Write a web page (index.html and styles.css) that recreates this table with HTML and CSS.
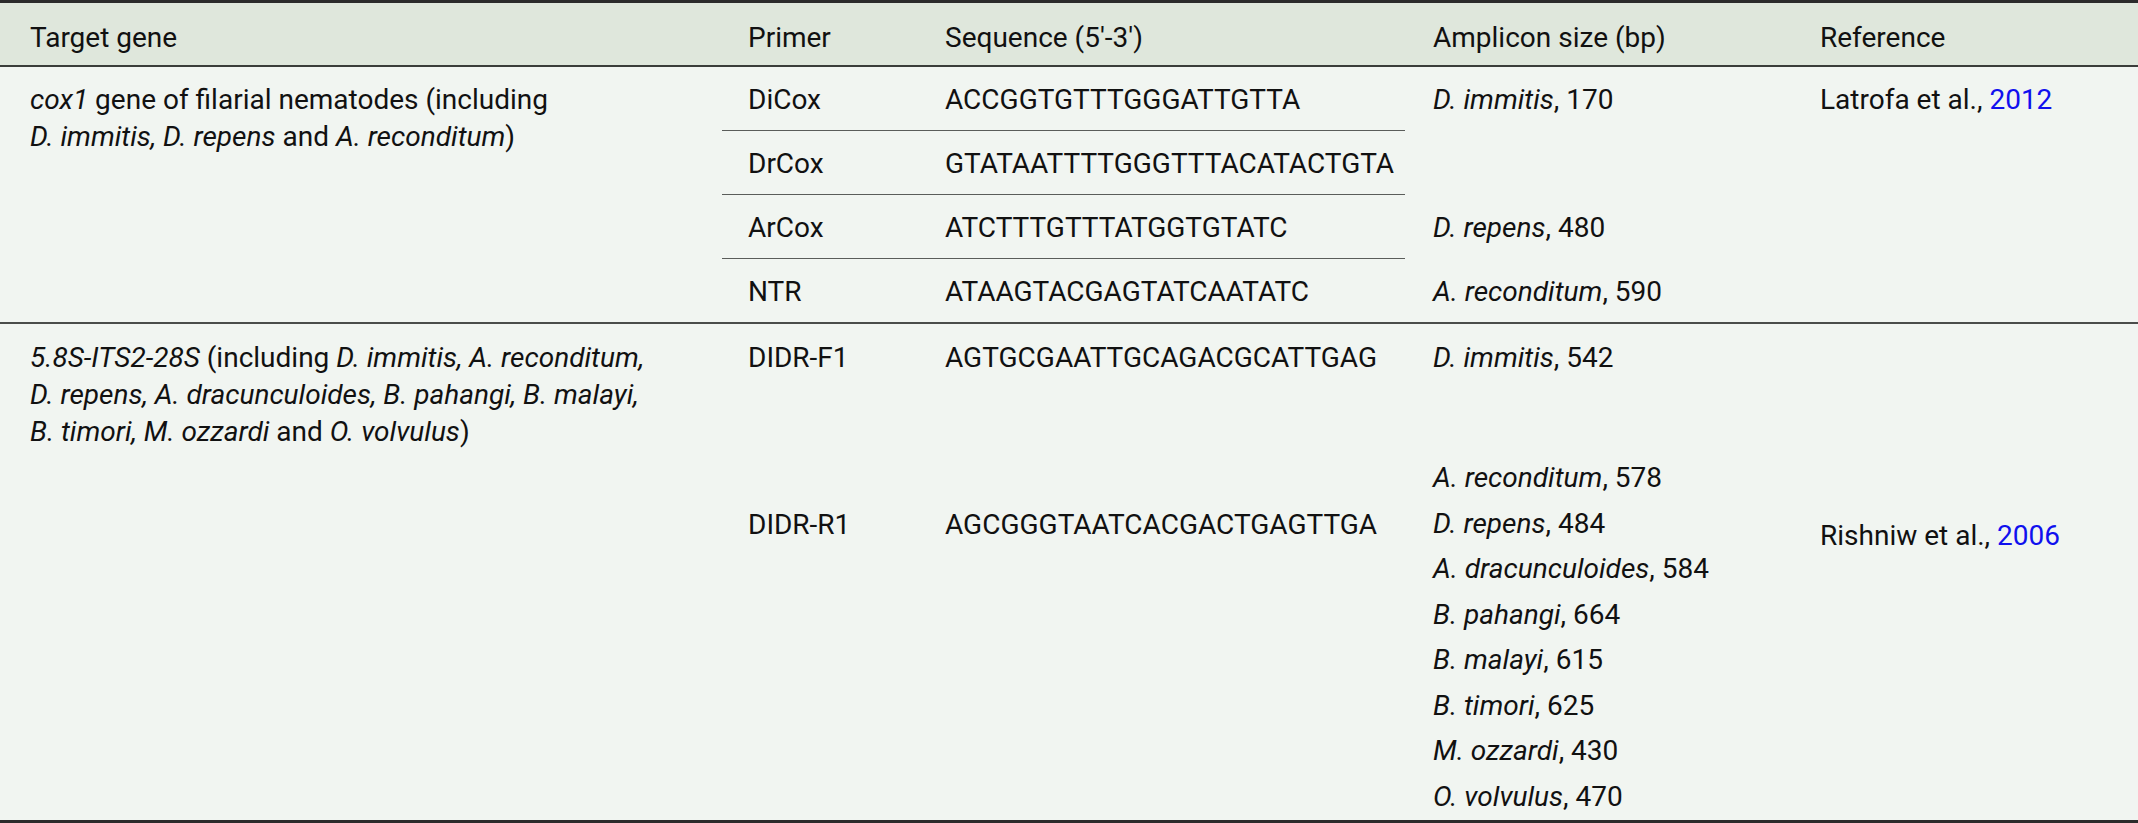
FILE: index.html
```html
<!DOCTYPE html>
<html lang="en">
<head>
<meta charset="utf-8">
<title>Primers table</title>
<link rel="stylesheet" href="styles.css">
</head>
<body>
<div class="table">
  <div class="row-head grid">
    <div class="hcell c1">Target gene</div>
    <div class="hcell c2">Primer</div>
    <div class="hcell c3">Sequence (5′-3′)</div>
    <div class="hcell c4">Amplicon size (bp)</div>
    <div class="hcell c5">Reference</div>
  </div>

  <div class="section s1 grid">
    <div class="cell gene span4"><i>cox1</i> gene of filarial nematodes (including<br><i>D. immitis, D. repens</i> and <i>A. reconditum</i>)</div>

    <div class="cell primer r1 ruled">DiCox</div>
    <div class="cell seq r1 ruled">ACCGGTGTTTGGGATTGTTA</div>
    <div class="cell amp r1"><i>D. immitis</i>, 170</div>

    <div class="cell primer r2 ruled">DrCox</div>
    <div class="cell seq r2 ruled">GTATAATTTTGGGTTTACATACTGTA</div>
    <div class="cell amp r2"></div>

    <div class="cell primer r3 ruled">ArCox</div>
    <div class="cell seq r3 ruled">ATCTTTGTTTATGGTGTATC</div>
    <div class="cell amp r3"><i>D. repens</i>, 480</div>

    <div class="cell primer r4">NTR</div>
    <div class="cell seq r4">ATAAGTACGAGTATCAATATC</div>
    <div class="cell amp r4"><i>A. reconditum</i>, 590</div>

    <div class="cell ref span4">Latrofa et al., <a href="#" class="cite">2012</a></div>
  </div>

  <div class="section s2 grid">
    <div class="cell gene"><i>5.8S-ITS2-28S</i> (including <i>D. immitis, A. reconditum,</i><br><i>D. repens, A. dracunculoides, B. pahangi, B. malayi,</i><br><i>B. timori, M. ozzardi</i> and <i>O. volvulus</i>)</div>
    <div class="cell primer stack">
      <div>DIDR-F1</div>
      <div class="second">DIDR-R1</div>
    </div>
    <div class="cell seq stack">
      <div>AGTGCGAATTGCAGACGCATTGAG</div>
      <div class="second">AGCGGGTAATCACGACTGAGTTGA</div>
    </div>
    <div class="cell amp stack">
      <div><i>D. immitis</i>, 542</div>
      <ul class="amp-list">
        <li><i>A. reconditum</i>, 578</li>
        <li><i>D. repens</i>, 484</li>
        <li><i>A. dracunculoides</i>, 584</li>
        <li><i>B. pahangi</i>, 664</li>
        <li><i>B. malayi</i>, 615</li>
        <li><i>B. timori</i>, 625</li>
        <li><i>M. ozzardi</i>, 430</li>
        <li><i>O. volvulus</i>, 470</li>
      </ul>
    </div>
    <div class="cell ref ref2">Rishniw et al., <a href="#" class="cite">2006</a></div>
  </div>
</div>
</body>
</html>
```

FILE: styles.css
```css
html, body {
  margin: 0;
  padding: 0;
  background: #f1f5f1;
}

body {
  font-family: Roboto, "Liberation Sans", sans-serif;
  font-size: 28px;
  line-height: 37px;
  color: #111;
  width: 2138px;
  height: 823px;
  overflow: hidden;
}

.table {
  border-top: 3px solid #2b2b2b;
  border-bottom: 3px solid #2b2b2b;
  background: #f1f5f1;
}

.grid {
  display: grid;
  grid-template-columns: 722px 197px 486px 388px 1fr;
}

.row-head {
  background: #dfe7dc;
  border-bottom: 2px solid #3a3d3a;
  height: 62px;
}

.hcell {
  padding: 16px 0 9px;
}

.c1, .gene { padding-left: 30px; }
.c2, .primer { padding-left: 26px; }
.c3, .seq { padding-left: 26px; }
.c4, .amp { padding-left: 28px; }
.c5, .ref { padding-left: 27px; }

.section.s1 {
  grid-template-rows: 64px 64px 64px 63px;
  border-bottom: 2px solid #4a4d4a;
}

.cell {
  padding-top: 14px;
}

.span4 { grid-row: 1 / 5; }
.s1 .gene { grid-column: 1; }
.s1 .ref { grid-column: 5; }
.s1 .primer { grid-column: 2; }
.s1 .seq { grid-column: 3; }
.s1 .amp { grid-column: 4; }
.r1 { grid-row: 1; }
.r2 { grid-row: 2; }
.r3 { grid-row: 3; }
.r4 { grid-row: 4; }

.ruled {
  border-bottom: 1px solid #5a5d5a;
}

.section.s2 {
  height: 496px;
}

.s2 .cell {
  padding-top: 15px;
}

.stack {
  display: flex;
  flex-direction: column;
}

.stack .second {
  margin-top: 130px;
}

.amp-list {
  list-style: none;
  margin: 79px 0 0;
  padding: 0;
  line-height: 45.5px;
}

.s2 .ref2 {
  padding-top: 193px;
}

.cite {
  color: #1010ee;
  text-decoration: none;
}
```
